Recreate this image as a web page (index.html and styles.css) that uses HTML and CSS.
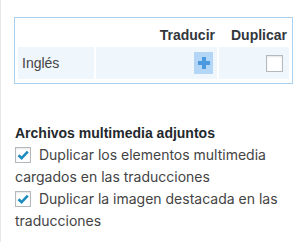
FILE: index.html
```html
<!DOCTYPE html>
<html lang="es">

<head>
  <meta charset="UTF-8">
  <title>Traducciones</title>
  <link rel="stylesheet" href="styles.css">
</head>

<body>
  <div class="panel">
    <!--tabla de idiomas-->
    <div class="lang-box">
      <table class="lang-table">
        <tr class="head">
          <th class="col-name"></th>
          <th class="col-translate">Traducir</th>
          <th class="col-dup">Duplicar</th>
        </tr>
        <tr class="row">
          <td class="col-name">Inglés</td>
          <td class="col-translate">
            <span class="add-btn">
              <svg width="14" height="14" viewBox="0 0 14 14">
                <rect x="5" y="1" width="4" height="12" fill="#4b99df" />
                <rect x="1" y="5" width="12" height="4" fill="#4b99df" />
              </svg>
            </span>
          </td>
          <td class="col-dup"><span class="cb"></span></td>
        </tr>
      </table>
    </div>

    <!--archivos adjuntos-->
    <div class="media">
      <h4 class="media-title">Archivos multimedia adjuntos</h4>
      <label class="opt">
        <span class="cb checked">
          <svg width="14" height="14" viewBox="0 0 14 14">
            <path d="M2.5 7.2 L5.6 10.2 L11.8 3.6" fill="none" stroke="#1e8cbe" stroke-width="2.6" />
          </svg>
        </span>
        Duplicar los elementos multimedia cargados en las traducciones
      </label>
      <label class="opt">
        <span class="cb checked">
          <svg width="14" height="14" viewBox="0 0 14 14">
            <path d="M2.5 7.2 L5.6 10.2 L11.8 3.6" fill="none" stroke="#1e8cbe" stroke-width="2.6" />
          </svg>
        </span>
        Duplicar la imagen destacada en las traducciones
      </label>
    </div>
  </div>
</body>

</html>
```

FILE: styles.css
```css
* {
  margin: 0;
  padding: 0;
  box-sizing: border-box;
}

body {
  font-family: "Liberation Sans", Arial, sans-serif;
  font-size: 14px;
  color: #444;
  background-color: #fff;
}

.panel {
  /*左邊的灰線*/
  border-left: 1px solid #e8e8e8;
  height: 242px;
  padding: 17px 7px 0 13px;
}

.lang-box {
  border: 1px solid #a9d2f0;
  padding: 1px 1px 2px 1px;
}

.lang-table {
  width: 100%;
  border-spacing: 2px;
}

.lang-table th {
  font-weight: bold;
  color: #32373c;
  text-align: right;
  height: 24px;
  line-height: 18px;
  vertical-align: bottom;
  padding: 0 2px 1px 0;
}

.lang-table td {
  background-color: #eff6fc;
  height: 32px;
  line-height: 21px;
  vertical-align: middle;
}

.col-name {
  width: 76px;
  padding-left: 4px;
}

.row .col-translate {
  text-align: right;
  padding-right: 4px;
}

.row .col-dup {
  width: 70px;
  text-align: right;
  padding-right: 6px;
}

.add-btn {
  display: inline-flex;
  align-items: center;
  justify-content: center;
  width: 19px;
  height: 22px;
  background-color: #b4d6f6;
  vertical-align: middle;
}

.cb {
  display: inline-flex;
  align-items: center;
  justify-content: center;
  width: 17px;
  height: 17px;
  border: 1px solid #b4b9be;
  background-color: #fff;
  box-shadow: inset 0 1px 2px rgba(0, 0, 0, 0.1);
  vertical-align: middle;
}

.media {
  margin-top: 38px;
  padding-left: 1px;
  line-height: 22px;
}

.media-title {
  font-size: 14px;
  font-weight: bold;
  color: #23282d;
}

.opt {
  display: block;
  font-family: Inter, "Liberation Sans", sans-serif;
  font-size: 14px;
}

.opt .cb {
  width: 16px;
  height: 16px;
  vertical-align: -2px;
  margin-right: 4px;
}
```
